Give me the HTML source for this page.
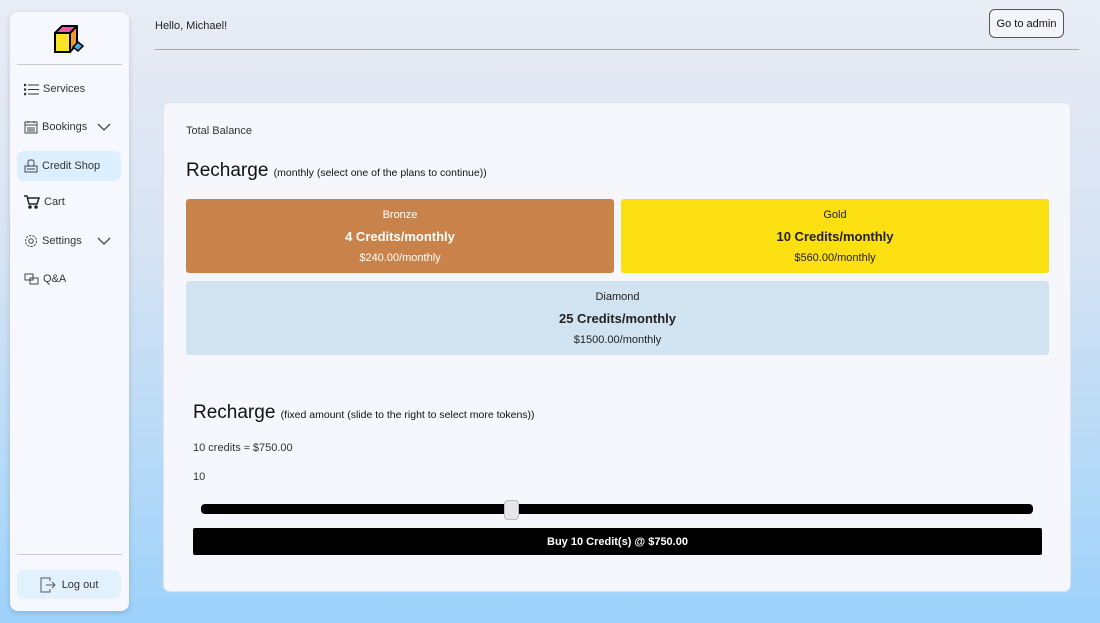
<!DOCTYPE html>
<html><head><meta charset="utf-8"><style>
*{box-sizing:border-box;margin:0;padding:0}
body{width:1100px;height:623px;overflow:hidden;font-family:"Liberation Sans",sans-serif;background:linear-gradient(180deg,#e9ecf5 0%,#d6e3f3 40%,#9dd2fb 100%);position:relative;color:#222}
.side{position:absolute;left:10px;top:12px;width:119px;height:599px;background:#f6f8fd;border-radius:8px;box-shadow:0 2px 6px rgba(0,0,0,.15)}
.logo{position:absolute;left:43px;top:12px}
.hr{position:absolute;left:7px;right:7px;height:1px;background:#c9ccd2}
.item{position:absolute;left:7px;width:104px;height:30px;display:flex;align-items:center;padding-left:7px;font-size:11px;color:#333}
.item svg{margin-right:4px}
.item.act{background:#dcefff;border-radius:7px}
.chev{position:absolute;left:80px}
.logout{position:absolute;left:7px;top:558px;width:104px;height:29px;background:#e2f1fe;border-radius:7px;display:flex;align-items:center;justify-content:center;font-size:11px;color:#333}
.hello{position:absolute;left:155px;top:20px;font-size:11px;color:#222}
.admin{position:absolute;left:989px;top:9px;width:75px;height:29px;border:1px solid #555;border-radius:6px;background:#f3f5fa;font-size:11px;display:flex;align-items:center;justify-content:center;color:#111}
.topline{position:absolute;left:155px;top:49px;width:924px;height:1px;background:#aaa}
.card{position:absolute;left:163px;top:102px;width:908px;height:490px;background:#f6f7fc;border-radius:7px;border:1px solid #e0e3ea}
.t{position:absolute;font-size:11px;color:#333}
.h{position:absolute;font-size:19px;color:#111}
.h small{font-size:10.5px}
.plan{position:absolute;border-radius:3px;text-align:center;color:#222}
.plan .a{font-size:11px;margin-top:10px}
.plan .b{font-size:13px;font-weight:bold;margin-top:8px}
.plan .c{font-size:11px;margin-top:8px}
.track{position:absolute;left:37px;top:401px;width:832px;height:10px;background:#000;border-radius:4px}
.thumb{position:absolute;left:340px;top:397px;width:15px;height:20px;background:#e6e6ec;border:1px solid #bbb;border-radius:4px}
.buy{position:absolute;left:29px;top:425px;width:849px;height:27px;background:#000;color:#fff;font-size:11px;font-weight:bold;display:flex;align-items:center;justify-content:center;border-radius:2px}
</style></head><body>
<div class="side">
 <svg class="logo" width="32" height="30" viewBox="0 0 32 30"><path d="M2 9 L9 2 L24 2 L17 9Z" fill="#e95aa5" stroke="#000" stroke-width="2" stroke-linejoin="round"/><path d="M17 9 L24 2 L24 20 L17 28Z" fill="#ef9a2c" stroke="#000" stroke-width="2" stroke-linejoin="round"/><rect x="2" y="9" width="15" height="19" fill="#fbe32a" stroke="#000" stroke-width="2"/><path d="M20 23 L25 18 L30 22 L25 27Z" fill="#4aa9dd" stroke="#000" stroke-width="1.5"/></svg>
 <div class="hr" style="top:52px"></div>
 <div class="item" style="top:62px"><svg width="15" height="13" viewBox="0 0 15 13" stroke="#333" fill="none"><path d="M4 2H15M4 6.5H15M4 11H15"/><circle cx="1" cy="2" r=".8" fill="#333"/><circle cx="1" cy="6.5" r=".8" fill="#333"/><circle cx="1" cy="11" r=".8" fill="#333"/></svg>Services</div>
 <div class="item" style="top:100px"><svg width="14" height="14" viewBox="0 0 14 14" stroke="#444" fill="none"><rect x="1" y="2" width="12" height="11"/><path d="M1 5H13M4 1V3M10 1V3M4 7V12M6 7V12M8 7V12M10 7V12"/></svg>Bookings<svg class="chev" width="14" height="8" viewBox="0 0 14 8" fill="none" stroke="#444" stroke-width="1.3"><path d="M1 1L7 7L13 1"/></svg></div>
 <div class="item act" style="top:139px"><svg width="14" height="14" viewBox="0 0 14 14" stroke="#444" fill="none"><rect x="4" y="1" width="6" height="6" rx="2"/><rect x="1" y="7" width="12" height="6"/><path d="M3 10H11"/></svg>Credit Shop</div>
 <div class="item" style="top:175px"><svg width="16" height="14" viewBox="0 0 16 14" stroke="#222" fill="none" stroke-width="1.5"><path d="M0 1H3L5 9H13L15 3H4"/><circle cx="6" cy="12" r="1" fill="#222"/><circle cx="12" cy="12" r="1" fill="#222"/></svg>Cart</div>
 <div class="item" style="top:214px"><svg width="14" height="14" viewBox="0 0 14 14" stroke="#444" fill="none"><circle cx="7" cy="7" r="2.2"/><circle cx="7" cy="7" r="5.5" stroke-dasharray="2.2 1.2"/></svg>Settings<svg class="chev" width="14" height="8" viewBox="0 0 14 8" fill="none" stroke="#444" stroke-width="1.3"><path d="M1 1L7 7L13 1"/></svg></div>
 <div class="item" style="top:252px"><svg width="15" height="13" viewBox="0 0 15 13" stroke="#444" fill="none"><rect x="1" y="1" width="8" height="6"/><rect x="6" y="5" width="8" height="6"/></svg>Q&amp;A</div>
 <div class="hr" style="top:542px"></div>
 <div class="logout"><svg width="16" height="16" viewBox="0 0 16 16" fill="none" stroke="#555"><path d="M10 4V1H1V15H10V12M6 8H15M12 5L15 8L12 11"/></svg>&nbsp;&nbsp;Log out</div>
</div>
<div class="hello">Hello, Michael!</div>
<div class="admin">Go to admin</div>
<div class="topline"></div>
<div class="card">
 <div class="t" style="left:22px;top:22px">Total Balance</div>
 <div class="h" style="left:22px;top:57px">Recharge <small>(monthly (select one of the plans to continue))</small></div>
 <div class="plan" style="left:22px;top:96px;width:428px;height:74px;background:#c9834a;color:#fff"><div class="a">Bronze</div><div class="b">4 Credits/monthly</div><div class="c">$240.00/monthly</div></div>
 <div class="plan" style="left:457px;top:96px;width:428px;height:74px;background:#fbdf10"><div class="a">Gold</div><div class="b">10 Credits/monthly</div><div class="c">$560.00/monthly</div></div>
 <div class="plan" style="left:22px;top:178px;width:863px;height:74px;background:#d1e3f0"><div class="a">Diamond</div><div class="b">25 Credits/monthly</div><div class="c">$1500.00/monthly</div></div>
 <div class="h" style="left:29px;top:299px">Recharge <small>(fixed amount (slide to the right to select more tokens))</small></div>
 <div class="t" style="left:29px;top:339px">10 credits ≈ $750.00</div>
 <div class="t" style="left:29px;top:368px">10</div>
 <div class="track"></div><div class="thumb"></div>
 <div class="buy">Buy 10 Credit(s) @ $750.00</div>
</div>
</body></html>
